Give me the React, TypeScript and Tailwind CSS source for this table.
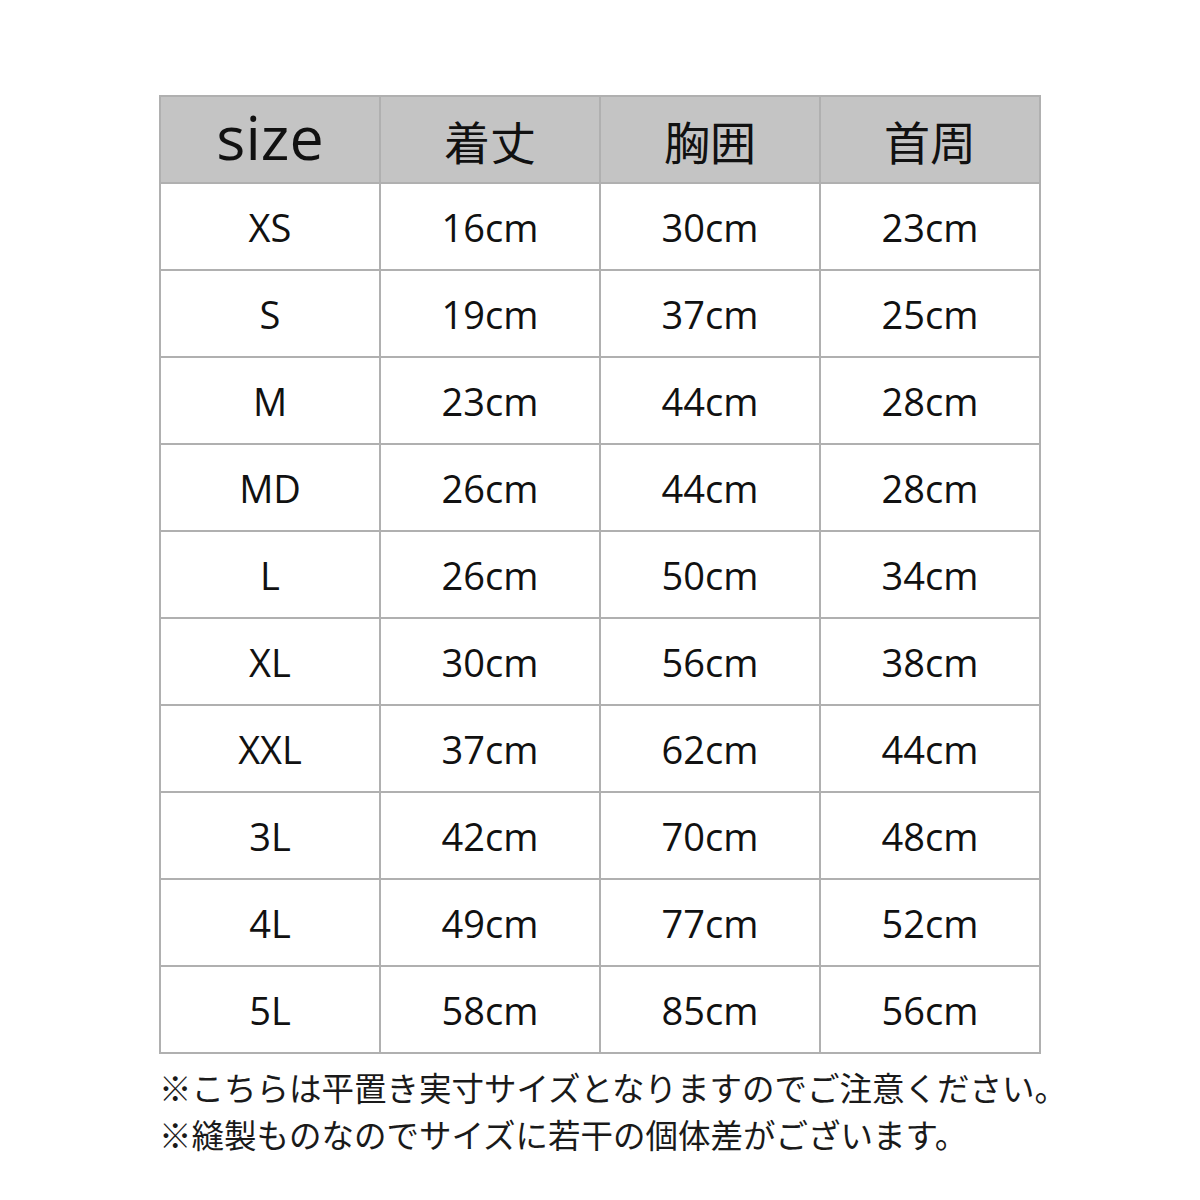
const rows: [string, string, string, string][] = [
  ["XS", "16cm", "30cm", "23cm"],
  ["S", "19cm", "37cm", "25cm"],
  ["M", "23cm", "44cm", "28cm"],
  ["MD", "26cm", "44cm", "28cm"],
  ["L", "26cm", "50cm", "34cm"],
  ["XL", "30cm", "56cm", "38cm"],
  ["XXL", "37cm", "62cm", "44cm"],
  ["3L", "42cm", "70cm", "48cm"],
  ["4L", "49cm", "77cm", "52cm"],
  ["5L", "58cm", "85cm", "56cm"],
];

const jp = { fontFamily: '"Noto Sans CJK JP", "Noto Sans", sans-serif' };
const latin = { fontFamily: '"Open Sans", "Noto Sans", sans-serif' };

export default function App() {
  return (
    <div className="w-[1200px] h-[1200px] bg-white text-[#111]">
      <div className="pt-[95px] pl-[159px]">
        <table className="w-[882px] border-collapse table-fixed">
          <thead>
            <tr className="h-[87px] bg-[#c4c4c4]">
              <th className="border-2 border-[#b0b0b0] text-[61px] font-normal leading-none pb-[6px]" style={latin}>
                size
              </th>
              {["着丈", "胸囲", "首周"].map((h) => (
                <th key={h} className="border-2 border-[#b0b0b0] text-[46px] font-normal leading-none pt-0" style={jp}>
                  {h}
                </th>
              ))}
            </tr>
          </thead>
          <tbody>
            {rows.map((r) => (
              <tr key={r[0]} className="h-[87px]">
                {r.map((c, i) => (
                  <td
                    key={i}
                    className="border-2 border-[#b0b0b0] text-center text-[38px] leading-none pt-0"
                    style={latin}
                  >
                    {c}
                  </td>
                ))}
              </tr>
            ))}
          </tbody>
        </table>
        <div className="mt-[9px] text-[32.5px] leading-[47px] text-[#1a1a1a] whitespace-nowrap" style={jp}>
          <p>※こちらは平置き実寸サイズとなりますのでご注意ください。</p>
          <p>※縫製ものなのでサイズに若干の個体差がございます。</p>
        </div>
      </div>
    </div>
  );
}
